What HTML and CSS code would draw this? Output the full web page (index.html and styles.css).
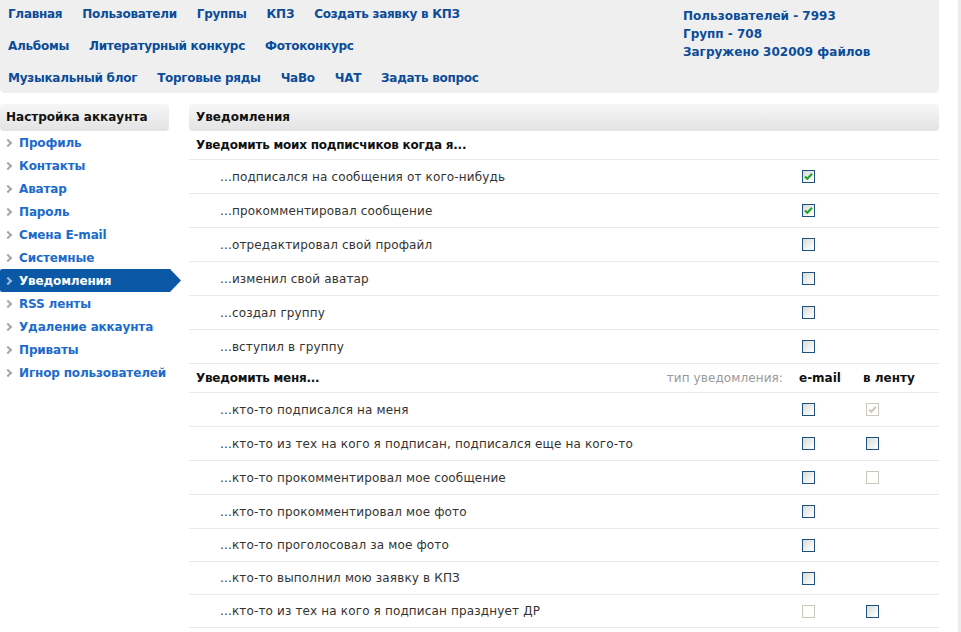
FILE: index.html
```html
<!DOCTYPE html>
<html lang="ru">
<head>
<meta charset="utf-8">
<title>Уведомления</title>
<link rel="stylesheet" href="styles.css">
</head>
<body>
<div class="page">
  <div class="main">
    <header class="top">
      <nav class="nav">
        <div class="nav-row">
          <a href="#">Главная</a><a href="#">Пользователи</a><a href="#">Группы</a><a href="#">КПЗ</a><a href="#">Создать заявку в КПЗ</a>
        </div>
        <div class="nav-row">
          <a href="#">Альбомы</a><a href="#">Литературный конкурс</a><a href="#">Фотоконкурс</a>
        </div>
        <div class="nav-row">
          <a href="#">Музыкальный блог</a><a href="#">Торговые ряды</a><a href="#">ЧаВо</a><a href="#">ЧАТ</a><a href="#">Задать вопрос</a>
        </div>
      </nav>
      <div class="stats">
        <div>Пользователей - 7993</div>
        <div>Групп - 708</div>
        <div>Загружено 302009 файлов</div>
      </div>
    </header>

    <div class="body">
      <aside class="side">
        <div class="bar">Настройка аккаунта</div>
        <ul class="menu">
          <li><a href="#"><i class="chev"></i>Профиль</a></li>
          <li><a href="#"><i class="chev"></i>Контакты</a></li>
          <li><a href="#"><i class="chev"></i>Аватар</a></li>
          <li><a href="#"><i class="chev"></i>Пароль</a></li>
          <li><a href="#"><i class="chev"></i>Смена E-mail</a></li>
          <li><a href="#"><i class="chev"></i>Системные</a></li>
          <li class="active"><a href="#"><i class="chev"></i>Уведомления</a></li>
          <li><a href="#"><i class="chev"></i>RSS ленты</a></li>
          <li><a href="#"><i class="chev"></i>Удаление аккаунта</a></li>
          <li><a href="#"><i class="chev"></i>Приваты</a></li>
          <li><a href="#"><i class="chev"></i>Игнор пользователей</a></li>
        </ul>
      </aside>

      <section class="content">
        <div class="bar bar-content">Уведомления</div>

        <div class="row head">
          <div class="label">Уведомить моих подписчиков когда я...</div>
        </div>
        <div class="row"><div class="label item">...подписался на сообщения от кого-нибудь</div><div class="cell"><input type="checkbox" class="cb" checked></div><div class="cell"></div></div>
        <div class="row"><div class="label item">...прокомментировал сообщение</div><div class="cell"><input type="checkbox" class="cb" checked></div><div class="cell"></div></div>
        <div class="row"><div class="label item">...отредактировал свой профайл</div><div class="cell"><input type="checkbox" class="cb"></div><div class="cell"></div></div>
        <div class="row"><div class="label item">...изменил свой аватар</div><div class="cell"><input type="checkbox" class="cb"></div><div class="cell"></div></div>
        <div class="row"><div class="label item">...создал группу</div><div class="cell"><input type="checkbox" class="cb"></div><div class="cell"></div></div>
        <div class="row"><div class="label item">...вступил в группу</div><div class="cell"><input type="checkbox" class="cb"></div><div class="cell"></div></div>

        <div class="row head">
          <div class="label split"><span>Уведомить меня...</span><span class="type">тип уведомления:</span></div>
          <div class="cell colhead">e-mail</div>
          <div class="cell colhead">в ленту</div>
        </div>
        <div class="row"><div class="label item">...кто-то подписался на меня</div><div class="cell"><input type="checkbox" class="cb"></div><div class="cell"><input type="checkbox" class="cb" checked disabled></div></div>
        <div class="row"><div class="label item">...кто-то из тех на кого я подписан, подписался еще на кого-то</div><div class="cell"><input type="checkbox" class="cb"></div><div class="cell"><input type="checkbox" class="cb"></div></div>
        <div class="row"><div class="label item">...кто-то прокомментировал мое сообщение</div><div class="cell"><input type="checkbox" class="cb"></div><div class="cell"><input type="checkbox" class="cb" disabled></div></div>
        <div class="row"><div class="label item">...кто-то прокомментировал мое фото</div><div class="cell"><input type="checkbox" class="cb"></div><div class="cell"></div></div>
        <div class="row short"><div class="label item">...кто-то проголосовал за мое фото</div><div class="cell"><input type="checkbox" class="cb"></div><div class="cell"></div></div>
        <div class="row short"><div class="label item">...кто-то выполнил мою заявку в КПЗ</div><div class="cell"><input type="checkbox" class="cb"></div><div class="cell"></div></div>
        <div class="row short"><div class="label item">...кто-то из тех на кого я подписан празднует ДР</div><div class="cell"><input type="checkbox" class="cb" disabled></div><div class="cell"><input type="checkbox" class="cb"></div></div>
      </section>
    </div>
  </div>
  <div class="edge"></div>
</div>
</body>
</html>
```

FILE: styles.css
```css
html, body {
  margin: 0;
  padding: 0;
  background: #fff;
}

body {
  font-family: "DejaVu Sans", Verdana, sans-serif;
  font-size: 12px;
  color: #333;
}

a {
  text-decoration: none;
}

.page {
  display: flex;
  width: 961px;
  min-height: 632px;
}

.main {
  width: 939px;
}

.edge {
  margin-left: auto;
  width: 3px;
  background: #ececec;
}

/* top panel */
.top {
  display: flex;
  height: 93px;
  background: #efefef;
  border-radius: 0 0 5px 5px;
  box-sizing: border-box;
  padding-left: 8px;
}

.nav {
  width: 675px;
  padding-top: 4px;
  display: flex;
  flex-direction: column;
  gap: 12px;
}

.nav-row {
  display: flex;
  gap: 20px;
  height: 20px;
  align-items: center;
}

.nav-row a {
  font-weight: bold;
  color: #0b4c98;
  white-space: nowrap;
  letter-spacing: -0.28px;
}

.stats {
  padding-top: 7px;
  line-height: 18px;
  font-weight: bold;
  color: #0b4c98;
}

/* body */
.body {
  display: flex;
  gap: 20px;
  margin-top: 11px;
}

.bar {
  height: 27px;
  line-height: 27px;
  background: linear-gradient(#f6f6f6, #e3e3e3);
  border-radius: 4px;
  font-weight: bold;
  color: #111;
  padding-left: 6px;
  white-space: nowrap;
}

.side {
  width: 169px;
  flex: none;
}

.menu {
  list-style: none;
  margin: 0;
  padding: 0;
}

.menu li a {
  display: flex;
  align-items: center;
  height: 23px;
  font-weight: bold;
  color: #1c6bcb;
  white-space: nowrap;
  letter-spacing: -0.15px;
}

.chev {
  display: block;
  width: 4px;
  height: 4px;
  border-top: 2px solid #a8a8a8;
  border-right: 2px solid #a8a8a8;
  transform: rotate(45deg);
  margin-left: 5px;
  margin-right: 8px;
}

.menu li.active a {
  width: 181px;
  background: #0b59a6;
  color: #fff;
  clip-path: polygon(0 0, 170px 0, 100% 50%, 170px 100%, 0 100%);
  border-radius: 2px 0 0 2px;
}

.menu li.active .chev {
  border-color: #9db8d8;
}

.content {
  width: 750px;
  flex: none;
}

.bar-content {
  padding-left: 7px;
}

.row {
  display: grid;
  grid-template-columns: 1fr 64px 64px;
  padding-right: 13px;
  height: 34px;
  box-sizing: border-box;
  border-bottom: 1px solid #e9e9e9;
  align-items: center;
}

.row.short {
  height: 33px;
}

.row.head {
  height: 29px;
}

.label {
  padding-left: 7px;
  white-space: nowrap;
}

.head .label {
  letter-spacing: -0.24px;
}

.head .label,
.colhead {
  font-weight: bold;
  color: #111;
}

.label.item {
  padding-left: 31px;
  color: #333;
  letter-spacing: 0.15px;
}

.label.split {
  display: flex;
  justify-content: space-between;
  padding-right: 15px;
}

.type {
  font-weight: normal;
  color: #9a9a9a;
  letter-spacing: 0.1px;
}

.cell {
  display: flex;
  align-items: center;
}

.colhead {
  padding-left: 1px;
}

.cb {
  appearance: none;
  -webkit-appearance: none;
  width: 13px;
  height: 13px;
  margin: 0 0 0 4px;
  box-sizing: border-box;
  border: 1px solid #1c5180;
  background: linear-gradient(135deg, #d9d9d4 0%, #f6f6f4 70%, #ffffff 100%);
  display: block;
}

.cb:checked {
  background-image: url("data:image/svg+xml,%3Csvg xmlns='http://www.w3.org/2000/svg' width='11' height='11' viewBox='0 0 11 11'%3E%3Cpath d='M2 5.5 L4.3 7.8 L9 2.8' fill='none' stroke='%2321a121' stroke-width='2'/%3E%3C/svg%3E"), linear-gradient(135deg, #d9d9d4 0%, #f6f6f4 70%, #ffffff 100%);
  background-repeat: no-repeat;
  background-position: center;
}

.cb:disabled {
  border-color: #cac8bb;
  background: #fff;
}

.cb:disabled:checked {
  background-image: url("data:image/svg+xml,%3Csvg xmlns='http://www.w3.org/2000/svg' width='11' height='11' viewBox='0 0 11 11'%3E%3Cpath d='M2 5.5 L4.3 7.8 L9 2.8' fill='none' stroke='%23cac8bb' stroke-width='2'/%3E%3C/svg%3E");
  background-repeat: no-repeat;
  background-position: center;
}
```
